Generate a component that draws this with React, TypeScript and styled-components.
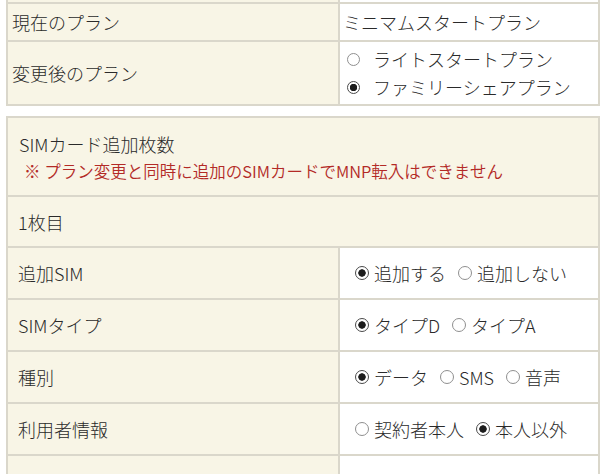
import React from 'react';
import styled, { createGlobalStyle } from 'styled-components';

const GlobalStyle = createGlobalStyle`
  html, body {
    margin: 0;
    padding: 0;
    background: #fff;
  }
  body {
    font-family: "Noto Sans CJK JP", "Noto Sans", sans-serif;
    font-weight: 300;
    color: #2a2a2a;
  }
`;

const LINE = '#dad7cb';
const BEIGE = '#f8f5e6';

const Page = styled.div`
  padding-left: 6px;
  width: 594px;
`;

const Table = styled.div<{ $top?: boolean; $gap?: number }>`
  border-left: 2px solid ${LINE};
  border-right: 2px solid ${LINE};
  border-top: ${p => (p.$top ? `2px solid ${LINE}` : 'none')};
  margin-top: ${p => p.$gap ?? 0}px;
`;

const Row = styled.div<{ $h: number }>`
  display: grid;
  grid-template-columns: 332px 1fr;
  height: ${p => p.$h}px;
  border-bottom: 2px solid ${LINE};
`;

const Label = styled.div<{ $pad: number; $open?: boolean }>`
  background: ${BEIGE};
  border-right: ${p => (p.$open ? 'none' : `2px solid ${LINE}`)};
  display: flex;
  align-items: center;
  padding-left: ${p => p.$pad}px;
  font-size: 18px;
`;

const Value = styled.div<{ $pad: number; $column?: boolean; $tint?: boolean }>`
  background: ${p => (p.$tint ? BEIGE : '#fff')};
  display: flex;
  flex-direction: ${p => (p.$column ? 'column' : 'row')};
  justify-content: ${p => (p.$column ? 'center' : 'flex-start')};
  align-items: ${p => (p.$column ? 'flex-start' : 'center')};
  padding-left: ${p => p.$pad}px;
  font-size: 18px;
  line-height: 28px;
`;

const Header = styled.div`
  background: ${BEIGE};
  padding: 13px 10px 11px 11px;
  border-bottom: 2px solid ${LINE};
  height: 79px;
  box-sizing: border-box;
`;

const Title = styled.div`
  font-size: 18px;
  line-height: 27px;
`;

const Note = styled.div`
  font-size: 16.5px;
  font-weight: 350;
  line-height: 27px;
  color: #b32a26;
  padding-left: 5px;
`;

const Option = styled.label<{ $gap: number; $after: number; $indent: number }>`
  display: inline-flex;
  align-items: center;
  gap: ${p => p.$gap}px;
  margin-left: ${p => p.$indent}px;
  margin-right: ${p => p.$after}px;
  white-space: nowrap;
`;

const Dot = styled.span<{ $on: boolean; $size: number }>`
  display: block;
  width: ${p => p.$size}px;
  height: ${p => p.$size}px;
  min-width: ${p => p.$size}px;
  box-sizing: border-box;
  border-radius: 50%;
  border: 1.5px solid ${p => (p.$on ? '#4a4a4a' : '#8f8f8f')};
  background: ${p =>
    p.$on
      ? 'radial-gradient(circle, #1c1c1c 0 3.4px, #fff 4px)'
      : '#fff'};
  flex: none;
`;

type Choice = { text: string; on: boolean };

const topChoices: Choice[] = [
  { text: 'ライトスタートプラン', on: false },
  { text: 'ファミリーシェアプラン', on: true },
];

const simRows: { label: string; choices: Choice[] }[] = [
  {
    label: '追加SIM',
    choices: [
      { text: '追加する', on: true },
      { text: '追加しない', on: false },
    ],
  },
  {
    label: 'SIMタイプ',
    choices: [
      { text: 'タイプD', on: true },
      { text: 'タイプA', on: false },
    ],
  },
  {
    label: '種別',
    choices: [
      { text: 'データ', on: true },
      { text: 'SMS', on: false },
      { text: '音声', on: false },
    ],
  },
  {
    label: '利用者情報',
    choices: [
      { text: '契約者本人', on: false },
      { text: '本人以外', on: true },
    ],
  },
];

export default function App() {
  return (
    <>
      <GlobalStyle />
      <Page>
        <Table>
          <Row $h={2}>
            <Label $pad={4} />
            <Value $pad={3} />
          </Row>
          <Row $h={36}>
            <Label $pad={4}>現在のプラン</Label>
            <Value $pad={3}>ミニマムスタートプラン</Value>
          </Row>
          <Row $h={62}>
            <Label $pad={4}>変更後のプラン</Label>
            <Value $pad={3} $column>
              {topChoices.map(c => (
                <Option key={c.text} $gap={13} $after={0} $indent={4}>
                  <Dot $on={c.on} $size={13} />
                  {c.text}
                </Option>
              ))}
            </Value>
          </Row>
        </Table>

        <Table $top $gap={10}>
          <Header>
            <Title>SIMカード追加枚数</Title>
            <Note>※ プラン変更と同時に追加のSIMカードでMNP転入はできません</Note>
          </Header>
          <Row $h={49}>
            <Label $pad={10} $open>1枚目</Label>
            <Value $pad={0} $tint />
          </Row>
          {simRows.map(r => (
            <Row key={r.label} $h={50}>
              <Label $pad={10}>{r.label}</Label>
              <Value $pad={15}>
                {r.choices.map(c => (
                  <Option key={c.text} $gap={5} $after={12} $indent={0}>
                    <Dot $on={c.on} $size={14} />
                    {c.text}
                  </Option>
                ))}
              </Value>
            </Row>
          ))}
          <Row $h={50}>
            <Label $pad={10} />
            <Value $pad={15} />
          </Row>
        </Table>
      </Page>
    </>
  );
}
